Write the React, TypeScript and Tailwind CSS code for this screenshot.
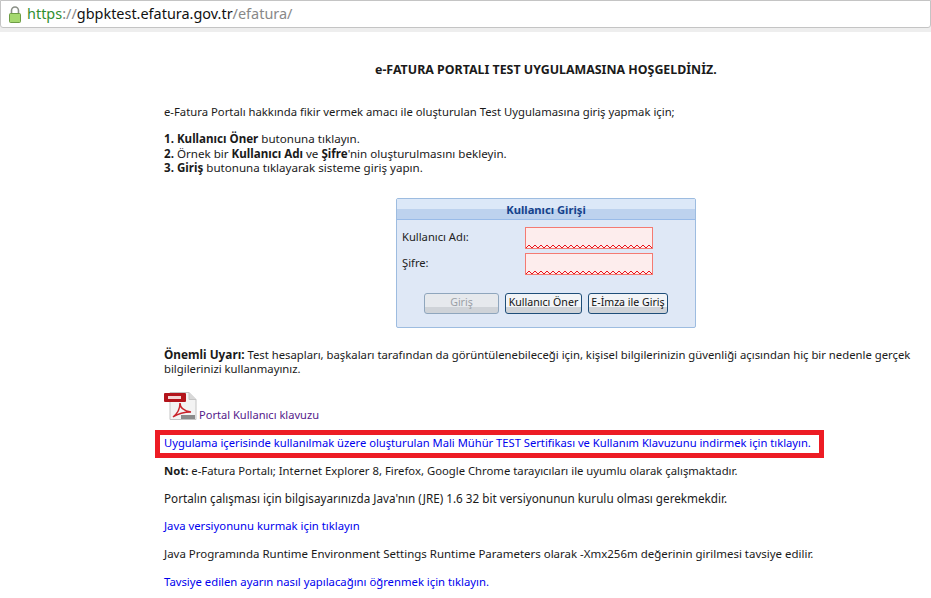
const font = { fontFamily: '"Noto Sans", sans-serif' };

function Lock() {
  return (
    <svg width="12" height="17" viewBox="0 0 12 17" className="shrink-0">
      <path d="M2.5 8V4.5a3.5 3.5 0 0 1 7 0V8" fill="none" stroke="#8a8f86" strokeWidth="1.6" />
      <rect x="0.5" y="7.5" width="11" height="9" rx="1" fill="#a5d86f" stroke="#6d9c45" />
    </svg>
  );
}

function PdfIcon() {
  return (
    <svg width="33" height="28" viewBox="0 0 33 28" className="shrink-0">
      <path d="M6 0.5h19l7 7v20H6z" fill="#f3f3f3" stroke="#c4c4c4" />
      <path d="M25 0.5v7h7" fill="#d8d8d8" stroke="#c4c4c4" />
      <rect x="0" y="1" width="22" height="9" fill="#b3141b" rx="1" />
      <rect x="4" y="4" width="13" height="3" fill="#f4d4d4" />
      <path d="M9 25c4-3 7-8 7-14 0 5 4 8 11 9-7 0-12 1-18 5z" fill="none" stroke="#c9252c" strokeWidth="1.5" />
      <rect x="17" y="23" width="14" height="4" fill="#8b8b8b" />
    </svg>
  );
}

function Zigzag() {
  return (
    <svg className="absolute left-0 bottom-0" width="126" height="3" viewBox="0 0 126 3" shapeRendering="crispEdges">
      <path
        d="M0 3 L3 0 L6 3 L9 0 L12 3 L15 0 L18 3 L21 0 L24 3 L27 0 L30 3 L33 0 L36 3 L39 0 L42 3 L45 0 L48 3 L51 0 L54 3 L57 0 L60 3 L63 0 L66 3 L69 0 L72 3 L75 0 L78 3 L81 0 L84 3 L87 0 L90 3 L93 0 L96 3 L99 0 L102 3 L105 0 L108 3 L111 0 L114 3 L117 0 L120 3 L123 0 L126 3"
        fill="none"
        stroke="#e8141c"
        strokeWidth="1.2"
      />
    </svg>
  );
}

function FormButton({ label, width, disabled }: { label: string; width: string; disabled?: boolean }) {
  return (
    <button
      className={
        disabled
          ? `h-[21px] ${width} rounded-[3px] border border-[#8fa6bd] bg-[linear-gradient(#e6e9ed_70%,#cfd3d8_70%)] text-[10.6px] text-[#9aa0a6]`
          : `h-[21px] ${width} rounded-[3px] border border-[#1f4e79] bg-[linear-gradient(#f2f4f7_70%,#cfd3d8_70%)] text-[10.6px] text-[#111]`
      }
    >
      {label}
    </button>
  );
}

function Field({ label }: { label: string }) {
  return (
    <div className="flex items-center h-[22px]">
      <span className="w-[123px] text-[11.2px] text-[#222]">{label}</span>
      <div className="relative w-[128px] h-[22px] border border-[#f47a72] bg-[#fdeded]">
        <Zigzag />
      </div>
    </div>
  );
}

function LoginBox() {
  return (
    <div className="w-[300px] h-[130px] ml-[232px] rounded-[2px] border border-[#9dbce0] bg-[#dfe8f6]">
      <div className="h-[21px] border-b border-[#99bbe8] bg-[linear-gradient(#dce8f8_50%,#bdd2ee_50%)] text-center text-[11.2px] leading-[22px] font-bold text-[#15428b]">
        Kullanıcı Girişi
      </div>
      <div className="pl-[5px] pt-[7px] flex flex-col gap-[4px]">
        <Field label="Kullanıcı Adı:" />
        <Field label="Şifre:" />
      </div>
      <div className="mt-[18px] pl-[27px] flex gap-[6px]">
        <FormButton label="Giriş" width="w-[75px]" disabled />
        <FormButton label="Kullanıcı Öner" width="w-[77px]" />
        <FormButton label="E-İmza ile Giriş" width="w-[80px]" />
      </div>
    </div>
  );
}

export default function App() {
  return (
    <div className="w-[931px] h-[598px] overflow-hidden bg-white text-[11.3px] text-[#1a1a1a]" style={font}>
      <div className="h-[32px] bg-[#eeeeee]">
        <div className="h-[28px] bg-white border border-[#c4c4c4] rounded-b-[3px] flex items-center pl-[8px] gap-[6px] text-[14.45px]">
          <Lock />
          <span>
            <span className="text-[#2f8f2f]">https</span>
            <span className="text-[#888]">://</span>
            <span className="text-[#111]">gbpktest.efatura.gov.tr</span>
            <span className="text-[#888]">/efatura/</span>
          </span>
        </div>
      </div>

      <div className="pl-[164px] pr-[18px]">
        <div className="pt-[29px] pl-[211px] font-bold text-[12.4px] leading-[18px] whitespace-nowrap">
          e-FATURA PORTALI TEST UYGULAMASINA HOŞGELDİNİZ.
        </div>
        <p className="mt-[24px] leading-[18px]">
          e-Fatura Portalı hakkında fikir vermek amacı ile oluşturulan Test Uygulamasına giriş yapmak için;
        </p>
        <div className="mt-[11px] leading-[14.5px] text-[11.6px]">
          <p><b>1. Kullanıcı Öner</b> butonuna tıklayın.</p>
          <p><b>2.</b> Örnek bir <b>Kullanıcı Adı</b> ve <b>Şifre</b>'nin oluşturulmasını bekleyin.</p>
          <p><b>3. Giriş</b> butonuna tıklayarak sisteme giriş yapın.</p>
        </div>
        <div className="mt-[22px]">
          <LoginBox />
        </div>
        <p className="mt-[19px] leading-[14px]">
          <b className="text-[11.8px]">Önemli Uyarı:</b> Test hesapları, başkaları tarafından da görüntülenebileceği için, kişisel bilgilerinizin güvenliği açısından hiç bir nedenle gerçek bilgilerinizi kullanmayınız.
        </p>
        <div className="mt-[16px] flex items-end gap-[2px] h-[28px]">
          <PdfIcon />
          <span className="text-[11.1px] text-[#551a8b] leading-[14px] -mb-[2px]">Portal Kullanıcı klavuzu</span>
        </div>
        <div className="-ml-[9px] mt-[10px] w-[669px] h-[28px] border-[5px] border-[#ed1c24] pl-[4px] flex items-center text-[11.2px] text-[#0000ee] whitespace-nowrap">
          Uygulama içerisinde kullanılmak üzere oluşturulan Mali Mühür TEST Sertifikası ve Kullanım Klavuzunu indirmek için tıklayın.
        </div>
        <div className="mt-[6px] flex flex-col gap-[13.75px] leading-[14px]">
          <p><b>Not:</b> e-Fatura Portalı; Internet Explorer 8, Firefox, Google Chrome tarayıcıları ile uyumlu olarak çalışmaktadır.</p>
          <p className="text-[11.7px]">Portalın çalışması için bilgisayarınızda Java'nın (JRE) 1.6 32 bit versiyonunun kurulu olması gerekmekdir.</p>
          <p className="text-[#0000ee]">Java versiyonunu kurmak için tıklayın</p>
          <p className="text-[11.47px]">Java Programında Runtime Environment Settings Runtime Parameters olarak -Xmx256m değerinin girilmesi tavsiye edilir.</p>
          <p className="text-[#0000ee]">Tavsiye edilen ayarın nasıl yapılacağını öğrenmek için tıklayın.</p>
        </div>
      </div>
    </div>
  );
}
